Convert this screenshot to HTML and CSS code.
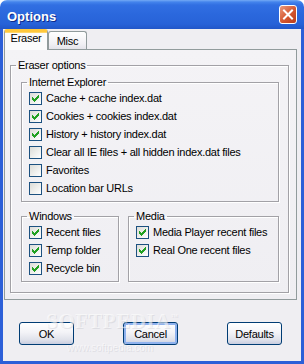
FILE: index.html
```html
<!DOCTYPE html>
<html lang="en">
<head>
    <meta charset="UTF-8">
    <title>Options</title>
    <link rel="stylesheet" href="styles.css">
</head>
<body>
    <svg class="defs" width="0" height="0">
        <symbol id="tick" viewBox="0 0 11 11">
            <path d="M2 4h1v1h1v1h1v-1h1v-1h1v-1h1v-1h1v3h-1v1h-1v1h-1v1h-1v1h-1v-1h-1v-1h-1z" fill="#21a121"/>
        </symbol>
    </svg>

    <div class="window">
        <!-- Title bar -->
        <div class="titlebar">
            <span class="title">Options</span>
            <span class="close">
                <svg width="16" height="17" viewBox="0 0 16 17">
                    <path d="M4 4.5l8 8M12 4.5l-8 8" stroke="#fff" stroke-width="2" stroke-linecap="square"/>
                </svg>
            </span>
        </div>

        <div class="client">
            <!-- Tabs -->
            <div class="tabs">
                <div class="tab active">Eraser</div>
                <div class="tab">Misc</div>
            </div>

            <div class="panel">
                <fieldset class="group outer">
                    <legend>Eraser options</legend>
                    <div class="group-body">
                        <fieldset class="group">
                            <legend>Internet Explorer</legend>
                            <div class="group-body list">
                                <label class="check"><span class="box"><svg><use href="#tick"/></svg></span>Cache + cache index.dat</label>
                                <label class="check"><span class="box"><svg><use href="#tick"/></svg></span>Cookies + cookies index.dat</label>
                                <label class="check"><span class="box"><svg><use href="#tick"/></svg></span>History + history index.dat</label>
                                <label class="check"><span class="box"></span>Clear all IE files + all hidden index.dat files</label>
                                <label class="check"><span class="box"></span>Favorites</label>
                                <label class="check"><span class="box"></span>Location bar URLs</label>
                            </div>
                        </fieldset>

                        <div class="split">
                            <fieldset class="group windows">
                                <legend>Windows</legend>
                                <div class="group-body list">
                                    <label class="check"><span class="box"><svg><use href="#tick"/></svg></span>Recent files</label>
                                    <label class="check"><span class="box"><svg><use href="#tick"/></svg></span>Temp folder</label>
                                    <label class="check"><span class="box"><svg><use href="#tick"/></svg></span>Recycle bin</label>
                                </div>
                            </fieldset>
                            <fieldset class="group media">
                                <legend>Media</legend>
                                <div class="group-body list">
                                    <label class="check"><span class="box"><svg><use href="#tick"/></svg></span>Media Player recent files</label>
                                    <label class="check"><span class="box"><svg><use href="#tick"/></svg></span>Real One recent files</label>
                                </div>
                            </fieldset>
                        </div>
                    </div>
                </fieldset>
            </div>

            <!-- Buttons -->
            <div class="buttons">
                <button class="btn">OK</button>
                <button class="btn default">Cancel</button>
                <button class="btn">Defaults</button>
            </div>
        </div>

        <div class="watermark">
            <span class="wm-big">SOFTPEDIA<sup>™</sup></span>
            <span class="wm-small">www.softpedia.com</span>
        </div>
    </div>
</body>
</html>
```

FILE: styles.css
```css
body {
    margin: 0;
    background: #ffffff;
    font-family: "Liberation Sans", Arial, sans-serif;
    font-size: 11px;
    letter-spacing: -0.25px;
    color: #000000;
}

.defs {
    position: absolute;
}

.window {
    position: relative;
    width: 304px;
    height: 364px;
    display: flex;
    flex-direction: column;
}

/* Title bar */
.titlebar {
    height: 29px;
    flex: none;
    display: flex;
    align-items: flex-start;
    justify-content: space-between;
    padding: 0 7px 0 7px;
    border-radius: 7px 7px 0 0;
    background: linear-gradient(#74aaf5 0, #4484ec 2px, #316fe2 5px, #2b68dd 14px, #2762d8 24px, #2156c8 29px);
}

.titlebar .title {
    margin-top: 9px;
    font-size: 13px;
    font-weight: bold;
    letter-spacing: 0;
    line-height: 15px;
    color: #ffffff;
    text-shadow: 1px 1px 0 #0d2a8a;
}

.titlebar .close {
    margin-top: 5px;
    width: 18px;
    height: 19px;
    box-sizing: border-box;
    border: 1px solid #ffffff;
    border-radius: 3px;
    background: linear-gradient(135deg, #eb9a7c, #d4562f 55%, #b93c1a);
    display: flex;
    align-items: center;
    justify-content: center;
}

/* Client area */
.client {
    flex: 1;
    display: flex;
    flex-direction: column;
    background: #efeef2;
    border: 3px solid #2c5fd8;
    border-top: none;
    padding: 0 4px 0 1px;
}

.tabs {
    height: 20px;
    display: flex;
    align-items: flex-end;
}

.tab {
    box-sizing: border-box;
    height: 18px;
    padding: 3px 0 1px;
    width: 39px;
    line-height: 13px;
    text-align: center;
    border: 1px solid #919b9c;
    border-bottom: none;
    border-radius: 3px 3px 0 0;
    background: linear-gradient(#ffffff, #f1f0f4 70%, #e4e3ea);
}

.tab.active {
    position: relative;
    z-index: 1;
    width: 44px;
    height: 21px;
    margin-bottom: -1px;
    padding: 0 0 5px;
    border-top: 3px solid #ffc83c;
    box-shadow: inset 0 1px 0 #ffd66a;
    background: #fbfbfc;
}

.panel {
    border: 1px solid #919b9c;
    background: linear-gradient(#f4f3f6, #efeef2);
    padding: 9px 7px 6px 5px;
}

/* Group boxes */
.group {
    margin: 0;
    padding: 0;
    min-width: 0;
    border: 1px solid #a2a1a6;
    box-shadow: inset 1px 1px 0 #ffffff, 1px 1px 0 #ffffff;
}

.group legend {
    margin-left: 5px;
    padding: 0 2px;
    line-height: 13px;
}

.outer > .group-body {
    padding: 4px 9px 10px 10px;
}

.list {
    padding: 0 4px 4px 7px;
}

.check {
    display: flex;
    align-items: center;
    gap: 4px;
    height: 18px;
    white-space: nowrap;
}

.box {
    flex: none;
    width: 13px;
    height: 13px;
    box-sizing: border-box;
    border: 1px solid #1c5180;
    background: linear-gradient(135deg, #dcdcd7, #ffffff);
}

.box svg {
    display: block;
    width: 11px;
    height: 11px;
    shape-rendering: crispEdges;
}

.split {
    display: flex;
    gap: 9px;
    margin-top: 8px;
}

.windows {
    width: 98px;
    box-sizing: border-box;
}

.media {
    flex: 1;
}

/* Buttons */
.buttons {
    display: flex;
    gap: 49px;
    padding: 22px 0 0 15px;
}

.btn {
    width: 55px;
    height: 23px;
    padding: 0;
    font-family: "Liberation Sans", Arial, sans-serif;
    font-size: 11px;
    letter-spacing: -0.25px;
    color: #000000;
    border: 1px solid #003c74;
    border-radius: 3px;
    background: linear-gradient(#ffffff, #f3f3f7 45%, #dfe1ea 80%, #c8cde0);
}

.btn.default {
    box-shadow: inset 0 0 0 2px #8fb2ee;
}

/* Watermark over the dialog */
.watermark {
    position: absolute;
    left: 46px;
    top: 309px;
    width: 130px;
    pointer-events: none;
    letter-spacing: 0;
}

.wm-big {
    display: block;
    font-family: "Liberation Serif", serif;
    font-weight: bold;
    font-size: 21px;
    letter-spacing: 0.5px;
    color: rgba(255, 255, 255, 0.55);
    text-shadow: 1px 1px 0 rgba(170, 170, 180, 0.25);
}

.wm-big sup {
    font-size: 7px;
    vertical-align: 9px;
}

.wm-small {
    display: block;
    margin: 8px 0 0 21px;
    font-size: 10px;
    color: rgba(255, 255, 255, 0.5);
    text-shadow: 1px 1px 0 rgba(170, 170, 180, 0.25);
}
```
